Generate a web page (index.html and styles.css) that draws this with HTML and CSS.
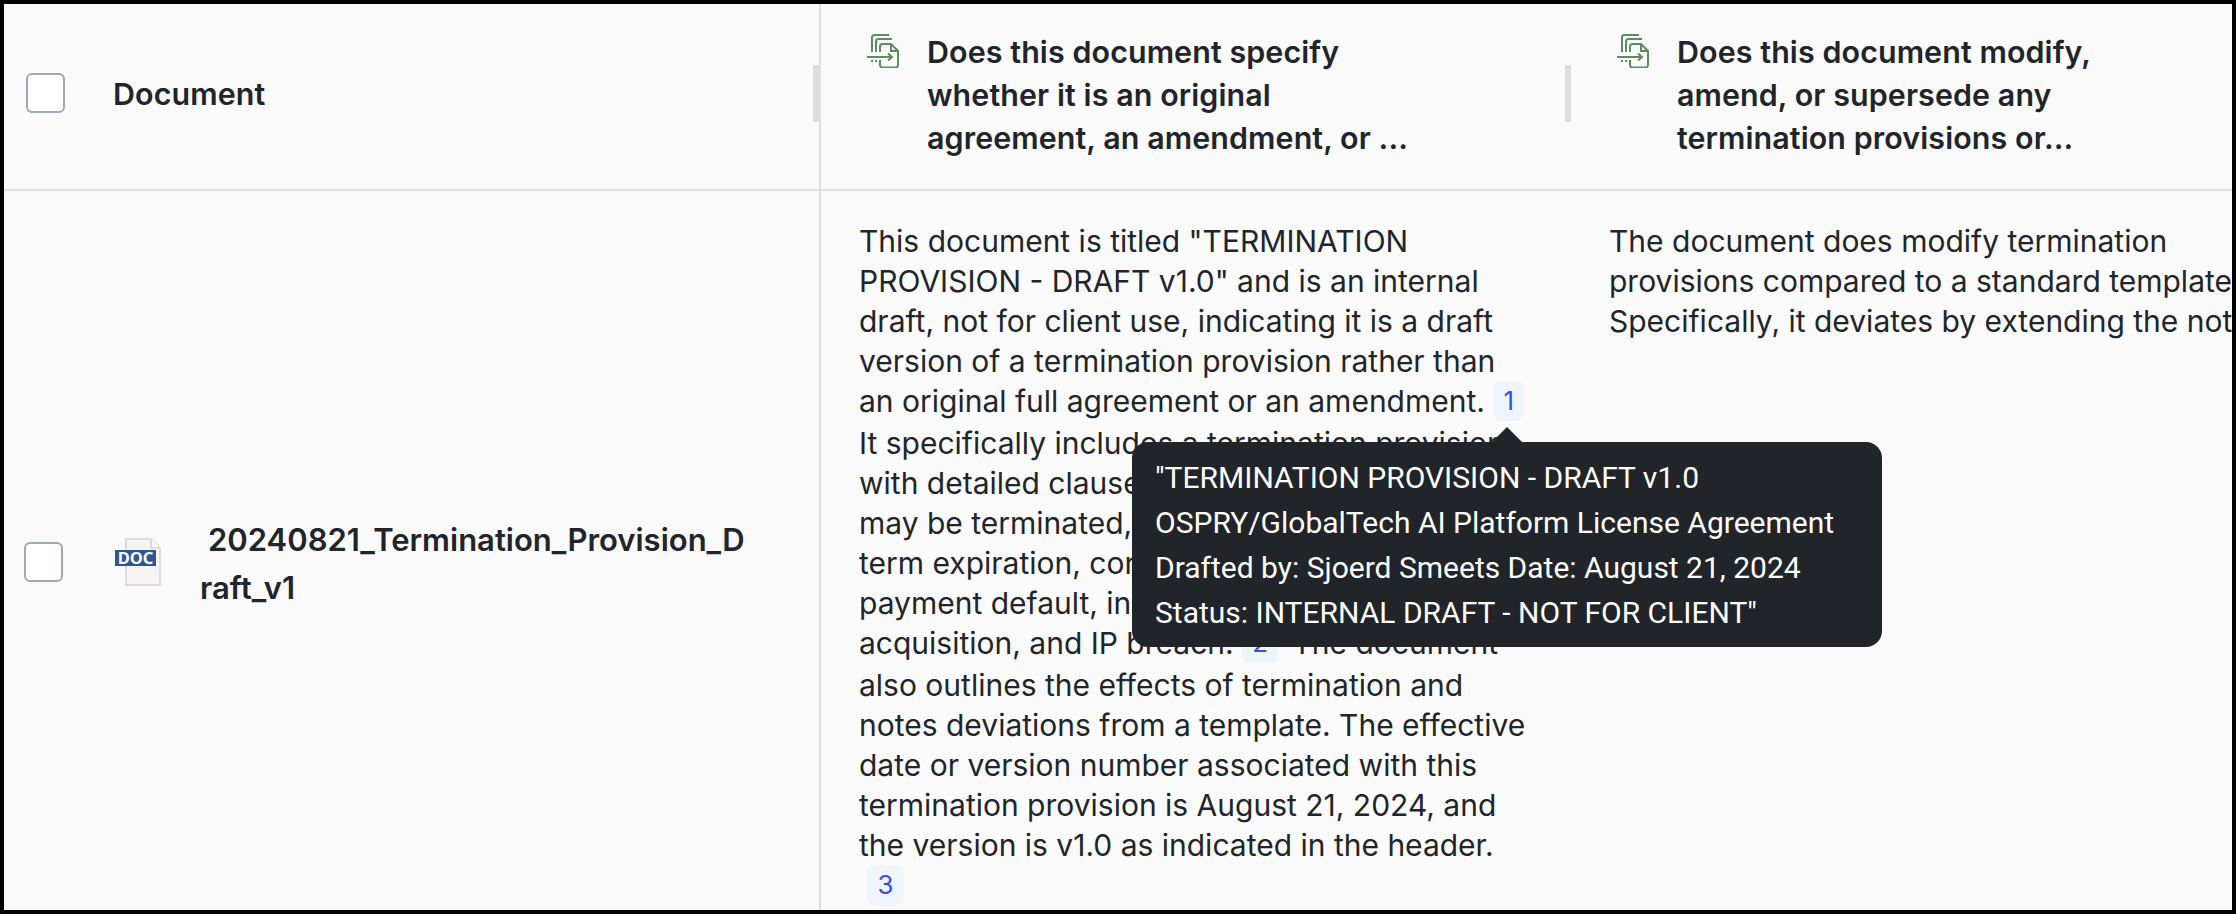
FILE: index.html
```html
<!DOCTYPE html>
<html lang="en">
<head>
<meta charset="utf-8">
<title>Document review</title>
<link rel="stylesheet" href="styles.css">
</head>
<body>
<svg class="defs" width="0" height="0" aria-hidden="true">
  <symbol id="extract" viewBox="0 0 32 34">
    <path d="M5 18V3.500Q5 1 7.500 1H22" />
    <path d="M9 18V7.500Q9 5 11.500 5H25" />
    <path d="M13 18V12.500Q13 10 15.500 10H24L31 17V31Q31 33.500 28.500 33.500H15.500Q13 33.500 13 31V26" />
    <path d="M24 10V17H31" />
    <path d="M0 23H25M21 19.500L25 23L21 26.500" />
    <path d="M5 26V28M9 26V28" />
  </symbol>
</svg>
<div class="frame">
  <div class="row head">
    <div class="cell doc-head">
      <span class="check"></span>
      <span class="doc-title">Document</span>
      <span class="grip"></span>
    </div>
    <div class="cell q-head">
      <svg class="q-icon"><use href="#extract"/></svg>
      <span class="q-text">Does this document specify whether it is an original agreement, an amendment, or ...</span>
      <span class="grip"></span>
    </div>
    <div class="cell q-head">
      <svg class="q-icon"><use href="#extract"/></svg>
      <span class="q-text">Does this document modify, amend, or supersede any termination provisions or...</span>
    </div>
  </div>
  <div class="row body">
    <div class="cell doc-cell">
      <span class="check row-check"></span>
      <svg class="doc-icon" viewBox="0 0 46 48" aria-hidden="true">
        <path class="sheet" d="M11 1H36L45 10V47H11Z"/>
        <path class="fold" d="M36 1V10H45"/>
        <rect class="band" x="0" y="12" width="41" height="16"/>
        <text class="band-text" x="20.500" y="25.500" text-anchor="middle">DOC</text>
      </svg>
      <span class="doc-name">20240821_Termination_Provision_Draft_v1</span>
    </div>
    <div class="cell answer">This document is titled "TERMINATION PROVISION - DRAFT v1.0" and is an internal draft, not for client use, indicating it is a draft version of a termination provision rather than an original full agreement or an amendment.<wbr><span class="cite-wrap">&nbsp;<span class="cite">1</span></span> It specifically includes a termination provision with detailed clauses on how the agreement may be terminated, including upon the initial term expiration, convenience, material breach, payment default, insolvency, corporate acquisition, and IP breach.<wbr><span class="cite-wrap">&nbsp;<span class="cite">2</span></span> The document also outlines the effects of termination and notes deviations from a template. The effective date or version number associated with this termination provision is August 21, 2024, and the version is v1.0 as indicated in the header.<wbr><span class="cite-wrap">&nbsp;<span class="cite">3</span></span></div>
    <div class="cell answer answer-wide">The document does modify termination provisions compared to a standard template. Specifically, it deviates by extending the notice.</div>
    <div class="track"></div>
  </div>
  <div class="tooltip">"TERMINATION PROVISION - DRAFT v1.0<br>OSPRY/GlobalTech AI Platform License Agreement<br>Drafted by: Sjoerd Smeets Date: August 21, 2024<br>Status: INTERNAL DRAFT - NOT FOR CLIENT"</div>
</div>
</body>
</html>
```
FILE: styles.css
```css
* { box-sizing: border-box; }
html, body { margin: 0; padding: 0; }
body { background: #000; font-family: Inter, "Liberation Sans", sans-serif; color: #212529; }
.defs { position: absolute; }
.frame {
  position: relative;
  width: 2236px;
  height: 914px;
  border: 4px solid #000;
  background: #fafafa;
  overflow: hidden;
}
.row { display: flex; width: 2228px; overflow: hidden; }
.head { height: 187px; border-bottom: 2px solid #e0e0e0; }
.body { height: 723px; align-items: flex-start; }
.cell { position: relative; flex: none; }
.doc-head, .doc-cell { width: 817px; display: flex; align-items: center; }
.doc-head { height: 185px; padding: 0 0 8px 22px; border-right: 2px solid #e0e0e0; }
.doc-title { margin: 2px 0 0 48px; font-size: 30.400px; font-weight: 600; letter-spacing: 0.100px; color: #212529; }
.check {
  flex: none;
  width: 39px;
  height: 40px;
  background: #fff;
  border: 2px solid #a3a8ae;
  border-radius: 6px;
}
.grip { position: absolute; right: 0; top: 61px; width: 6px; height: 57px; background: #dedede; }
.q-head { width: 750px; height: 185px; display: flex; align-items: flex-start; padding: 27px 0 0 46px; }
.q-icon {
  flex: none;
  width: 32px;
  height: 34px;
  margin-top: 3px;
  fill: none;
  stroke: #5b8c62;
  stroke-width: 2;
}
.q-text { width: 490px; margin-left: 28px; font-size: 30.400px; font-weight: 600; letter-spacing: 0.100px; line-height: 43px; }
.doc-cell { height: 742px; padding: 0 0 0 20px; border-right: 2px solid #e0e0e0; }
.row-check { width: 39px; }
.doc-icon { flex: none; width: 46px; height: 48px; margin-left: 52px; }
.sheet { fill: #f6f5f2; stroke: #dcdcdc; stroke-width: 2; }
.fold { fill: #fff; stroke: #dcdcdc; stroke-width: 2; }
.band { fill: #2f5597; }
.band-text { fill: #fff; font-family: "Noto Sans", sans-serif; font-size: 16.500px; font-weight: 700; }
.doc-name {
  width: 550px;
  margin-left: 39px;
  padding-top: 4px;
  font-size: 31px;
  font-weight: 600;
  line-height: 48px;
  text-indent: 8px;
  word-break: break-all;
}
.answer { width: 750px; padding: 30px 40px 0 38px; font-size: 30px; line-height: 40px; }
.answer-wide { padding-right: 30px; }
.cite-wrap { white-space: nowrap; }
.cite {
  display: inline-block;
  height: 40px;
  padding: 0 10px;
  margin: 0 6px 2px 0;
  background: #eff5fd;
  border-radius: 8px;
  color: #3b4de0;
  font-size: 26px;
  vertical-align: top;
}
.track { flex: none; width: 6px; height: 723px; margin-left: auto; border-left: 2px solid #e0e0e0; }
.tooltip {
  position: absolute;
  left: 1128px;
  top: 438px;
  width: 750px;
  height: 205px;
  padding: 13px 23px;
  background: #212529;
  border-radius: 16px;
  color: #fff;
  font-family: Roboto, "Liberation Sans", sans-serif;
  font-size: 30px;
  line-height: 45px;
}
.tooltip::before {
  content: "";
  position: absolute;
  left: 360px;
  top: -15px;
  border-left: 15px solid transparent;
  border-right: 15px solid transparent;
  border-bottom: 15px solid #212529;
}
```
